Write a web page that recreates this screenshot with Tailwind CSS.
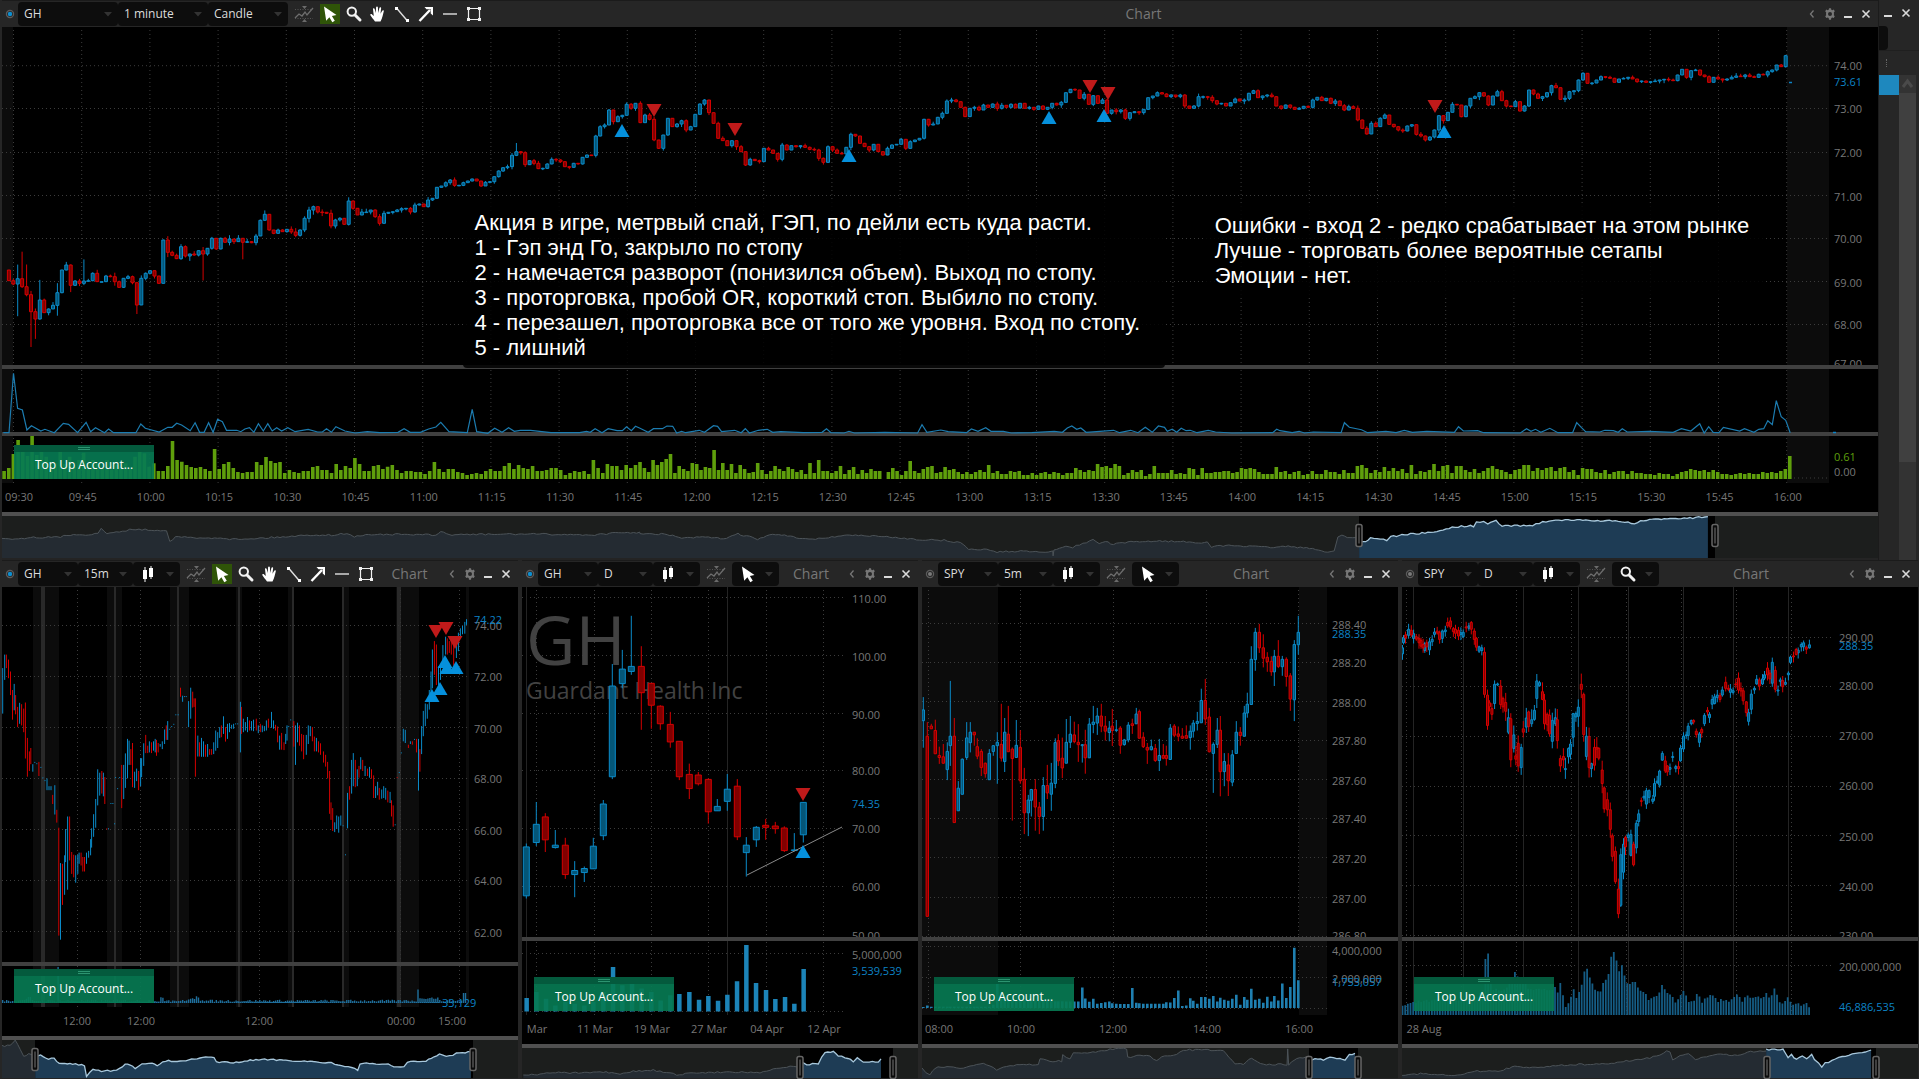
<!DOCTYPE html>
<html lang="ru">
<head>
<meta charset="utf-8">
<title>Chart</title>
<script src="https://cdn.jsdelivr.net/npm/@tailwindcss/browser@4"></script>
</head>
<body class="bg-[#262626] font-['Open_Sans','Noto_Sans',sans-serif] text-[#dcdcdc]">
<svg width="0" height="0" class="absolute" aria-hidden="true">
  <symbol id="i-link" viewBox="0 0 10 10"><circle cx="5" cy="5" r="3.6" fill="none" stroke="#5c5c5c" stroke-width="1.2"/><circle cx="5" cy="5" r="2.2" fill="#0d8fd0"/></symbol>
  <symbol id="i-link-off" viewBox="0 0 10 10"><circle cx="5" cy="5" r="3.6" fill="none" stroke="#5c5c5c" stroke-width="1.2"/><circle cx="5" cy="5" r="2" fill="#7a7a7a"/></symbol>
  <symbol id="i-trend" viewBox="0 0 20 18"><path d="M8 1h5L10.500 4zM8 17h5L10.500 14z" fill="#6b6b6b"/><path d="M1 13l4-4 3 2 3-4 2 3 6-7" fill="none" stroke="#6e6e6e" stroke-width="1.300"/><path d="M1 4.500h18M1 13.500h18" stroke="#555" stroke-dasharray="1 1.500"/></symbol>
  <symbol id="i-cursor" viewBox="0 0 20 20"><path d="M4 2.500l12.500 8.500-4.600.900 2.900 4.800-2.500 1.500-2.900-4.900-3.200 3.500z" fill="#fff"/></symbol>
  <symbol id="i-zoom" viewBox="0 0 20 20"><circle cx="7.800" cy="7.600" r="4.200" fill="none" stroke="#f2f2f2" stroke-width="2"/><path d="M11 11l5 5" stroke="#f2f2f2" stroke-width="3" stroke-linecap="round"/></symbol>
  <symbol id="i-hand" viewBox="0 0 20 20"><path d="M7 17.500c-1.500-2-3.800-4.700-4.600-6.200-.5-1 .8-1.600 1.700-.9l1.700 1.500L5 5.200c-.2-1.200 1.400-1.500 1.700-.3l1 4.100.4-5.700c.1-1.200 1.700-1.200 1.800 0l.3 5.600 1.200-4.800c.3-1.200 1.900-.9 1.700.3l-.6 5.400 1.700-3c.6-1 1.900-.5 1.600.5-.8 2.500-1.200 7-3.300 10.200z" fill="#fff"/></symbol>
  <symbol id="i-line" viewBox="0 0 20 20"><path d="M4.500 4l11 13" stroke="#e0e0e0" stroke-width="1.400"/><path d="M3 3h3v3H3zM14 15h3v3h-3z" fill="#fff"/></symbol>
  <symbol id="i-arrow" viewBox="0 0 20 20"><path d="M3.500 17L14 6" stroke="#fff" stroke-width="2.400"/><path d="M8.500 3H17v8.500l-2.300-2V5.300H10.500z" fill="#fff"/></symbol>
  <symbol id="i-dash" viewBox="0 0 20 20"><path d="M3 10h14" stroke="#a8a8a8" stroke-width="2"/></symbol>
  <symbol id="i-rect" viewBox="0 0 20 20"><path d="M4.500 4.500h11v11h-11z" fill="none" stroke="#f0f0f0" stroke-width="1.200"/><path d="M3 3h3v3H3zM14 3h3v3h-3zM3 14h3v3H3zM14 14h3v3h-3z" fill="#f0f0f0"/></symbol>
  <symbol id="i-candles" viewBox="0 0 14 18"><path d="M2 5h4v9H2zM8 3h4v9H8z" fill="#fff"/><path d="M4 2v15M10 1v13" stroke="#fff"/></symbol>
  <symbol id="i-caret" viewBox="0 0 8 5"><path d="M0 0h8L4 4.500z" fill="#333"/></symbol>
  <symbol id="i-back" viewBox="0 0 10 10"><path d="M6.500 1.500L3.500 5l3 3.500" fill="none" stroke="#777" stroke-width="1.300"/></symbol>
  <symbol id="i-gear" viewBox="0 0 12 12"><path fill="#777" fill-rule="evenodd" d="M5 .3h2l.3 1.500 1 .5 1.400-.8 1.100 1.700-1 1.200.2 1.600-.2 1.200 1 1.100-1.100 1.800-1.400-.7-1 .6L7 11.700H5l-.3-1.700-1-.6-1.400.7-1.100-1.800 1-1.100L2 6l.2-1.600-1-1.200L2.300 1.500l1.400.8 1-.5zM6 4a2 2 0 1 0 0 4 2 2 0 0 0 0-4z"/></symbol>
  <symbol id="i-min" viewBox="0 0 10 10"><path d="M1 8h8" stroke="#dadada" stroke-width="2"/></symbol>
  <symbol id="i-close" viewBox="0 0 10 10"><path d="M1.500 1.500l7 7M8.500 1.500l-7 7" stroke="#dadada" stroke-width="1.600"/></symbol>
</svg>

<main class="flex h-screen min-h-[700px] flex-col overflow-hidden pl-0.5">
  <div class="flex min-h-0 flex-[560_1_0%]">
    <section class="flex min-w-0 flex-1 flex-col" aria-label="GH 1 minute">
      <header id="h-main" class="flex h-[27px] shrink-0 items-center border-t border-[#1b1b1b] pr-[7px]"></header>
      <div class="relative min-h-0 flex-1">
        <svg id="c-main" class="absolute inset-0 size-full bg-black"></svg>
        <p class="absolute top-[175px] left-[24.6%] h-[166px] w-[702px] rounded bg-black/85 px-[11px] py-2 font-['Liberation_Sans',Arial,sans-serif] text-[22px]/[25px] whitespace-nowrap text-white">Акция в игре, метрвый спай, ГЭП, по дейли есть куда расти.<br>1 - Гэп энд Го, закрыло по стопу<br>2 - намечается разворот (понизился объем). Выход по стопу.<br>3 - проторговка, пробой OR, короткий стоп. Выбило по стопу.<br>4 - перезашел, проторговка все от того же уровня. Вход по стопу.<br>5 - лишний</p>
        <p class="absolute top-[178px] left-[64%] h-[90px] w-[560px] rounded bg-black/85 px-3 py-2 font-['Liberation_Sans',Arial,sans-serif] text-[22px]/[25px] whitespace-nowrap text-white">Ошибки - вход 2 - редко срабатывает на этом рынке<br>Лучше - торговать более вероятные сетапы<br>Эмоции - нет.</p>
        <button class="absolute bottom-[81px] left-3 h-[34px] w-[140px] border-t-[7px] border-[#045a3d] bg-[#067a52]/92 pb-0.5 text-xs text-white"><span class="absolute -top-[5px] left-16 h-[3px] w-3 border-y border-[#2c9470]"></span>Top Up Account...</button>
      </div>
    </section>
    <aside class="flex w-[41px] shrink-0 flex-col border-l border-[#1b1b1b]" aria-label="Panel">
      <header class="flex h-[26px] shrink-0 items-center gap-2 pl-1">
        <button aria-label="Minimize panel"><svg class="size-2.5"><use href="#i-min"/></svg></button>
        <button aria-label="Close panel"><svg class="size-2.5"><use href="#i-close"/></svg></button>
      </header>
      <div class="h-6 w-[9px] rounded-r bg-[#0d0d0d]"></div>
      <div class="h-[25px] border-t border-[#1f1f1f] pt-2 pl-[7px]"><div class="h-2 w-px border-l border-dotted border-[#666]"></div></div>
      <div class="flex min-h-0 flex-1">
        <div class="h-5 w-5 bg-[#1e88be]"></div>
        <div class="flex w-[17px] flex-col bg-[#333]">
          <svg class="h-[18px] w-[17px]" viewBox="0 0 17 18"><path d="M4 12l4.500-6 4.500 6" fill="none" stroke="#4a4a4a" stroke-width="3"/></svg>
          <div class="h-[76%] bg-[#404040]"></div>
        </div>
      </div>
    </aside>
  </div>

  <div class="grid min-h-0 flex-[519_1_0%] grid-cols-[516fr_396fr_476fr_516fr] gap-x-1 pr-px">
    <section class="flex min-w-0 flex-col" aria-label="GH 15 minutes">
      <header id="h-gh15" class="flex h-[27px] shrink-0 items-center border-t border-[#1b1b1b] pr-[7px]"></header>
      <div class="relative min-h-0 flex-1">
        <svg id="c-gh15" class="absolute inset-0 size-full bg-black"></svg>
        <button class="absolute bottom-[76px] left-3 h-[34px] w-[140px] border-t-[7px] border-[#045a3d] bg-[#067a52]/92 pb-0.5 text-xs text-white"><span class="absolute -top-[5px] left-16 h-[3px] w-3 border-y border-[#2c9470]"></span>Top Up Account...</button>
      </div>
    </section>
    <section class="flex min-w-0 flex-col" aria-label="GH daily">
      <header id="h-ghd" class="flex h-[27px] shrink-0 items-center border-t border-[#1b1b1b] pr-[7px]"></header>
      <div class="relative min-h-0 flex-1">
        <svg id="c-ghd" class="absolute inset-0 size-full bg-black"></svg>
        <button class="absolute bottom-[68px] left-3 h-[34px] w-[140px] border-t-[7px] border-[#045a3d] bg-[#067a52]/92 pb-0.5 text-xs text-white"><span class="absolute -top-[5px] left-16 h-[3px] w-3 border-y border-[#2c9470]"></span>Top Up Account...</button>
      </div>
    </section>
    <section class="flex min-w-0 flex-col" aria-label="SPY 5 minutes">
      <header id="h-spy5" class="flex h-[27px] shrink-0 items-center border-t border-[#1b1b1b] pr-[7px]"></header>
      <div class="relative min-h-0 flex-1">
        <svg id="c-spy5" class="absolute inset-0 size-full bg-black"></svg>
        <button class="absolute bottom-[68px] left-3 h-[34px] w-[140px] border-t-[7px] border-[#045a3d] bg-[#067a52]/92 pb-0.5 text-xs text-white"><span class="absolute -top-[5px] left-16 h-[3px] w-3 border-y border-[#2c9470]"></span>Top Up Account...</button>
      </div>
    </section>
    <section class="flex min-w-0 flex-col" aria-label="SPY daily">
      <header id="h-spyd" class="flex h-[27px] shrink-0 items-center border-t border-[#1b1b1b] pr-[7px]"></header>
      <div class="relative min-h-0 flex-1">
        <svg id="c-spyd" class="absolute inset-0 size-full bg-black"></svg>
        <button class="absolute bottom-[68px] left-3 h-[34px] w-[140px] border-t-[7px] border-[#045a3d] bg-[#067a52]/92 pb-0.5 text-xs text-white"><span class="absolute -top-[5px] left-16 h-[3px] w-3 border-y border-[#2c9470]"></span>Top Up Account...</button>
      </div>
    </section>
  </div>
</main>

<script>
// Window headers.
const caret = '<svg class="absolute right-1.5 h-[5px] w-2"><use href="#i-caret"/></svg>';
const tools = '<div class="ml-1 flex gap-1"><button aria-label="Cursor" class="bg-[#2f5408]"><svg class="size-5"><use href="#i-cursor"/></svg></button>' +
  [['Zoom', 'zoom'], ['Pan', 'hand'], ['Line', 'line'], ['Arrow', 'arrow'], ['Level', 'dash'], ['Rectangle', 'rect']].map(t => `<button aria-label="${t[0]}"><svg class="size-5"><use href="#i-${t[1]}"/></svg></button>`).join('') + '</div>';
const oneTool = icon => `<button aria-label="Tool" class="relative ml-1 flex h-6 w-[47px] items-center rounded bg-[#0d0d0d] pl-1.5"><svg class="size-5"><use href="#i-${icon}"/></svg>${caret}</button>`;
const styleIcon = `<button aria-label="Style" class="relative flex w-[47px] items-center rounded bg-[#0d0d0d] pl-2"><svg class="h-[18px] w-3.5"><use href="#i-candles"/></svg>${caret}</button>`;
const styleText = `<label class="relative flex w-20 items-center rounded bg-[#0d0d0d]"><select aria-label="Style" class="w-full appearance-none px-1.5"><option>Candle</option></select>${caret}</label>`;
function header(id, symbol, interval, link, style, toolbar, wide) {
  document.getElementById('h-' + id).innerHTML = `
    <svg class="mx-[3px] size-2.5"><use href="#${link}"/></svg>
    <div class="flex h-6 text-xs">
      <label class="relative flex items-center rounded bg-[#0d0d0d] ${wide ? 'w-[100px]' : 'w-[60px]'}"><input aria-label="Symbol" value="${symbol}" class="w-full bg-transparent px-1.5 outline-none">${caret}</label>
      <label class="relative flex items-center rounded bg-[#0d0d0d] ${wide ? 'w-[90px]' : 'w-[55px]'}"><select aria-label="Interval" class="w-full appearance-none px-1.5"><option>${interval}</option></select>${caret}</label>
      ${style}
    </div>
    <button aria-label="Studies" class="ml-1 flex w-6 justify-center"><svg class="h-[18px] w-5"><use href="#i-trend"/></svg></button>
    ${toolbar}
    <h2 class="flex-1 pr-1 text-center text-sm text-[#777]">Chart</h2>
    <div class="flex items-center gap-2">
      <button aria-label="Back"><svg class="size-2.5"><use href="#i-back"/></svg></button>
      <button aria-label="Settings"><svg class="-mx-px size-3"><use href="#i-gear"/></svg></button>
      <button aria-label="Minimize"><svg class="size-2.5"><use href="#i-min"/></svg></button>
      <button aria-label="Close"><svg class="size-2.5"><use href="#i-close"/></svg></button>
    </div>`;
}
header('main', 'GH', '1 minute', 'i-link', styleText, tools, true);
header('gh15', 'GH', '15m', 'i-link', styleIcon, tools);
header('ghd', 'GH', 'D', 'i-link', styleIcon, oneTool('cursor'));
header('spy5', 'SPY', '5m', 'i-link-off', styleIcon, oneTool('cursor'));
header('spyd', 'SPY', 'D', 'i-link-off', styleIcon, oneTool('zoom'));

// Deterministic noise for small wick and line detail.
let seed = 7;
const rnd = () => (seed = (seed * 16807) % 2147483647) / 2147483647;
const nums = s => s.trim().split(/[\s,]+/).map(Number);
// Each frame maps stored series units to drawing units: [originX, originY, unitsPerX, unitsPerY].
const A = [0, 0, 2.45, 3], B = [640, 0, 2.45, 3], C = [1280, 0, 2.454, 3];
const A2 = [0, 360, 2.45, 3], B2 = [640, 360, 2.45, 3], C2 = [1280, 360, 2.454, 3];
const G = [0, 550, 2.958, 2.964], H = [510, 550, 3, 2.964], S = [910, 550, 3, 2.964], D = [1390, 550, 2.964, 2.964];
const px = (f, x) => f[0] + x / f[2], py = (f, y) => f[1] + y / f[3];
const pts = (f, s) => { const n = nums(s), o = []; for (let i = 0; i < n.length; i += 2) o.push([px(f, n[i]), py(f, n[i + 1])]); return o; };
const spread = (f, x0, x1, s) => { const n = nums(s); return n.map((v, i) => [px(f, x0 + (x1 - x0) * i / (n.length - 1)), py(f, v)]); };
const rough = (p, step, amp) => { const o = []; for (let i = 0; i < p.length - 1; i++) { const [a, b] = p[i], [c, d] = p[i + 1], n = Math.max(1, Math.round((c - a) / step)); for (let k = 0; k < n; k++) o.push([a + (c - a) * k / n, b + (d - b) * k / n + (rnd() - .5) * amp]); } o.push(p[p.length - 1]); return o; };
const at = (p, x) => { for (let i = 1; i < p.length; i++) if (x <= p[i][0]) { const [a, b] = p[i - 1], [c, d] = p[i]; return b + (d - b) * (x - a) / (c - a || 1); } return p[p.length - 1][1]; };

// Minute candles: closes only, each opens at the previous close.
const closes = [
 ...spread(A, 11, 1557, "810 842 852 836 860 884 935 957 900 938 927 916 878 810 795 856 843 850 843 842 820 845 845 828 830 845 862 835 830 848 915 835 820 812 828 850 720 757 766 776 740 768 762 765 752 762 745 715 747 715 727 717 725 715 727 725 728 708 661 643 690 700 690 695 688 696 706 690 655 630 620 636 637 640 678 660 655 673 603 625 645 636 636 630 650 670 640 637 635 630 626 625 636 615 612 620 600 595 562 558 548 540 556 556 548 543 537 543 558 547 545 530 513 503 500 466 455 458 494 482 490 506 505 492 478 480 485 500 502 490 492 472 465 466 408 380 375 330 365 350 346 313 325 310"),
 ...spread(B, 1, 1559, "368 345 358 420 445 405 355 380 372 362 390 380 343 312 300 338 370 415 422 437 422 440 455 495 478 482 485 445 450 460 478 435 450 437 440 437 442 448 450 475 487 440 450 460 462 442 403 408 430 440 450 433 455 465 445 435 433 418 445 425 420 415 358 375 372 352 340 303 300 305 322 350 325 322 330 315 322 312 325 316 322 313 324 310 325 322 328 318 328 322 310 315 307 278 268 270 295 283 313 287 310 300 340 330 335 330 355 338 335 338 328 293 288 278 282 290 285 290 285 318 325 318 290 290 292 302 312 310 318 308 297 303 300 280 272 293 288 285 290 318"),
 ...spread(C, 3, 1241, "325 315 322 328 325 319 322 300 292 302 295 310 303 317 330 320 325 360 385 402 370 380 355 345 373 380 390 393 378 374 403 408 420 411 390 347 362 337 313 315 350 318 295 290 278 288 315 288 275 302 318 320 305 333 318 270 282 295 290 278 257 263 298 295 275 272 240 220 250 249 240 230 232 235 247 237 235 232 237 245 243 247 245 243 240 238 240 242 225 208 232 212 210 225 230 247 232 237 240 237 232 228 230 225 230 232 223 225 215 210 195 200 167")];
const extra = { 4: [26, 0], 5: [22, 0], 6: [0, 35], 7: [0, 18], 8: [16, 0], 3: [12, 30], 15: [0, 6], 18: [20, 0], 12: [8, 10], 30: [0, 9], 45: [0, 26], 54: [0, 17], 116: [8, 0] };
const mainCandles = closes.slice(1).map(([x, c], i) => {
  const o = closes[i][1], t = Math.min(o, c), b = Math.max(o, c), e = extra[i + 1] || [0, 0], w = i < 90 ? 5 : 3.5;
  return { x, t, b, hi: t - rnd() * rnd() * w - e[0], lo: b + rnd() * rnd() * w + e[1], up: c <= o };
});
const mainVol = [
 ...spread(A2, 10, 1557, "333 324 282 240 262 288 228 285 258 290 320 310 275 312 290 320 300 278 320 300 310 325 300 330 315 320 310 325 290 275 280 320 310 333 333 318 243 300 305 315 321 324 321 327 333 267 327 312 306 324 336 339 336 336 306 315 291 303 309 306 339 330 336 339 333 333 321 318 330 330 339 312 330 318 324 294 312 333 333 318 315 327 320 315 330 339 333 333 336 336 342 333 306 327 336 327 327 336 339 345 342 339 342 333 327 333 333 318 309 327 315 324 327 318 333 333 330 324 324 330 345 339 333 336 333 342 300 324 339 312 318 318 330 315 324 315"),
 ...spread(B2, 0, 1559, "306 324 336 300 315 306 297 282 339 318 327 333 309 312 330 321 324 270 330 309 330 312 339 315 327 339 336 309 330 342 333 318 327 333 321 327 336 330 342 309 339 300 333 333 339 333 318 342 330 321 342 330 339 327 333 333 357 336 324 333 345 333 303 333 339 327 321 318 339 336 321 330 327 336 342 336 342 336 330 336 315 339 333 342 342 333 336 333 345 345 339 345 339 336 342 336 339 345 339 339 324 330 336 330 333 312 321 318 324 312 318 345 339 330 336 330 348 342 318 339 339 339 330 342 339 342 324 327 345 324 339 339 336 336 333 333 339 336 324 327 324 327 336 342 342 342 321"),
 ...spread(C2, 2, 1251, "336 333 342 336 333 345 342 333 342 342 330 336 336 342 330 339 339 318 315 324 339 330 336 321 333 324 333 327 339 315 342 333 336 330 312 333 318 315 339 318 318 330 336 327 339 333 324 318 327 330 336 342 330 327 315 315 333 324 330 324 321 333 324 321 336 330 345 324 327 327 336 339 330 342 336 333 333 342 333 339 339 342 342 345 339 342 342 348 342 336 333 327 330 333 330 336 330 336 342 342 345 342 339 342 339 342 342 336 339 336 339 333 327 288")];
const mainLine = [
 ...pts(A2, "8,218 22,218 33,40 43,145 55,150 66,210 77,197 100,213 110,208 133,218 155,190 168,193 190,218 211,187 222,215 234,203 256,218 266,207 278,218 333,218 345,192 356,205 390,216 411,202 422,202 433,190 445,195 466,212 478,188 489,217 500,217 511,188 522,217 533,178 545,185 555,211 580,211 590,215 600,207 611,203 622,217 633,191 645,213 656,191 667,213 678,203 690,213 705,203 723,215 755,208 778,216 790,216 800,206 812,217 823,200 845,213 870,219 900,215 930,218 975,217 990,206 1005,217 1030,217 1050,207 1068,201 1080,187 1100,215 1145,218 1157,148 1168,215 1195,220 1212,205 1230,217 1246,203 1260,214 1275,211 1300,211 1350,218 1420,218 1437,214 1446,217 1458,206 1475,218 1490,206 1512,212 1525,212 1535,200 1547,212 1557,199"),
 ...pts(B2, "0,205 20,217 33,206 55,206 66,198 80,199 90,219 102,214 112,218 145,211 158,217 180,197 190,199 200,215 232,211 248,218 258,206 268,219 290,211 312,208 325,217 345,215 400,218 446,217 457,206 468,218 500,219 512,214 525,219 600,217 680,219 691,194 703,217 737,210 755,215 800,218 812,207 828,214 847,203 860,214 890,214 910,219 960,218 1015,214 1035,217 1047,204 1058,198 1070,208 1080,204 1093,217 1160,211 1175,218 1202,211 1220,218 1238,202 1255,217 1270,198 1285,202 1292,214 1304,208 1315,217 1326,205 1338,212 1348,211 1365,218 1392,211 1410,216 1450,219 1550,218 1560,208"),
 ...pts(C2, "0,212 30,218 47,214 60,219 82,216 150,218 158,188 170,202 200,209 215,218 260,214 285,218 305,211 325,217 360,214 428,217 438,200 450,213 485,212 500,218 590,219 605,206 616,214 627,208 640,217 662,205 682,218 718,218 728,188 740,203 750,215 785,216 797,211 818,212 830,217 840,206 852,216 905,214 965,217 985,206 1008,213 1030,191 1041,219 1052,200 1063,217 1077,218 1088,202 1128,213 1140,206 1163,217 1175,208 1187,206 1197,182 1208,194 1218,122 1230,170 1241,181 1252,218")];

// Full candles: colour+x, high, body top, body bottom, low.
const full = (f, s) => s.trim().split(/;\s*/).map(r => { const n = nums(r.slice(1)); return { x: px(f, n[0]), hi: py(f, n[1]), t: py(f, n[2]), b: py(f, n[3]), lo: py(f, n[4]), up: r[0] == 'b' }; });
const ghd = full(H, "b49 870 880 1025 1033;b79 747 813 867 877;r106 780 791 859 895;b136 830 875 882 885;r166 853 875 962 975;b194 922 950 962 1029;b223 938 944 956 984;b250 853 878 945 945;b280 741 753 847 860;b307 338 403 672 679;b337 296 353 396 410;b364 195 345 360 370;r394 285 345 423 533;r424 395 395 460 530;r451 460 463 515 533;r481 480 517 569 586;r508 567 567 672 682;r538 633 665 707 738;r565 658 667 693 698;r595 677 680 776 811;b622 738 760 773 773;b652 664 709 745 773;r682 679 700 850 860;b709 851 875 897 968;b739 818 822 859 880;r767 797 816 822 859;r796 806 818 826 841;r823 819 824 891 895;b853 839 889 891 893;b880 747 748 844 867");
const spy5 = full(S, "b40 436 474 506 586;r52 510 552 1086 1086;r64 515 522 530 530;r76 503 535 604 604;r88 583 609 615 634;r100 575 613 632 634;b112 570 597 651 682;b121 388 552 580 640;r133 498 552 808 808;b145 685 706 773 773;b157 618 620 724 724;b170 510 557 615 622;b181 510 540 571 600;r193 540 540 548 580;r202 558 583 611 620;r214 590 597 645 670;r226 630 632 663 675;b238 590 603 681 681;b250 578 580 597 610;b262 540 570 580 693;r274 456 576 617 627;b284 498 540 627 658;r295 462 546 598 598;r307 585 590 618 802;b319 504 579 615 615;r331 534 585 684 693;r343 646 680 779 842;b355 726 741 779 848;b364 708 710 742 790;r376 679 710 762 832;r388 747 762 790 842;b400 673 698 790 832;r412 637 698 720 738;b424 631 691 724 773;b436 558 571 692 706;r445 546 565 625 640;r457 556 617 646 676;b469 501 570 632 632;b481 492 546 570 587;r493 509 548 568 573;r505 516 570 577 628;b517 575 577 580 630;r526 533 577 616 663;b538 498 516 616 616;b550 462 510 517 543;b562 468 492 513 548;r574 456 492 522 540;r586 492 522 537 565;b598 507 528 541 567;r607 471 522 535 581;b619 504 533 535 540;r631 522 528 579 604;b643 560 563 577 580;b655 510 519 563 570;r667 500 515 520 545;b679 468 486 515 515;r688 473 479 558 558;r700 540 555 583 587;r712 572 585 593 634;b724 562 583 592 594;r736 575 588 624 628;b748 560 609 624 655;r760 575 609 617 620;r769 580 609 618 639;b781 516 528 621 621;r793 516 522 549 555;r805 523 545 552 567;r817 528 552 558 560;r829 520 550 558 558;b841 520 537 556 592;b850 504 513 537 556;b862 480 508 514 535;b874 411 446 512 512;r886 382 446 501 518;r898 468 495 598 600;b910 570 576 603 720;b922 498 534 576 587;r931 492 534 657 730;b943 602 627 657 700;r955 602 637 684 729;b967 593 607 688 700;b979 507 540 603 603;r991 525 540 550 580;b1003 462 483 552 552;b1012 423 457 483 497;b1024 285 324 458 458;b1036 231 244 325 358;r1048 219 244 290 305;r1060 250 290 321 348;r1072 303 318 331 361;r1084 315 330 361 373;b1093 296 315 361 403;r1105 267 315 345 350;b1117 314 324 346 373;r1129 318 324 375 405;r1141 365 373 442 477;b1153 267 280 444 507;b1165 195 244 281 310");
// Bodies only: colour+x, top, bottom.
const spyd = "b37 290 308;b40 260 275;r46 252 260;b55 235 253;r63 238 252;b70 248 262;r78 257 264;r86 263 275;r92 268 285;r98 280 290;b103 277 298;r109 275 287;b117 272 296;b125 265 272;b132 243 250;r140 240 246;r147 245 265;b155 240 262;b164 237 242;r171 215 225;r179 210 228;r188 233 242;r194 235 247;r203 238 255;b210 245 250;b217 244 257;r226 228 231;b234 225 232;r241 215 235;r250 240 265;r256 262 288;b264 287 300;b272 290 298;r280 303 428;r289 430 520;r295 453 465;r302 470 487;b310 398 455;b319 397 400;r328 403 458;r335 440 465;r343 452 478;b351 497 540;r358 500 622;b367 548 588;r373 610 620;r380 573 640;b389 585 645;r395 530 540;b404 498 525;r411 480 523;b420 503 515;b428 475 502;b435 388 440;b443 393 402;r452 420 443;r458 445 515;r466 487 518;r473 490 545;b481 505 567;b490 497 515;r496 503 565;r505 618 640;r514 612 622;b520 648 651;b529 588 613;b535 575 605;b543 485 555;b551 485 495;b558 466 493;r567 398 413;r574 428 547;b582 552 612;r590 553 645;b597 633 648;r606 585 638;r613 585 590;r619 588 617;r629 652 692;r635 705 767;r644 740 770;r653 770 828;r659 847 908;r668 893 983;r677 1005 1078;b684 903 1053;b692 872 955;r698 852 880;b706 845 852;b714 843 905;r722 872 933;b730 810 883;b737 782 805;r745 743 745;b753 730 735;b760 713 753;b768 713 733;b779 738 745;b784 692 730;b792 685 690;b799 655 697;b807 603 623;r816 625 655;r822 640 658;b830 645 650;b838 612 615;b847 642 648;r855 642 648;b861 587 625;b870 552 590;b878 548 550;b884 522 550;b893 505 515;r900 505 510;r908 537 547;b917 545 570;r924 532 542;b932 490 515;r941 475 480;b947 487 497;b955 443 457;b962 435 455;b970 430 437;r978 432 443;b985 415 430;r995 392 410;r1003 410 413;b1009 412 422;b1017 417 422;r1025 397 400;r1033 380 415;r1040 410 418;r1047 417 447;r1056 450 482;b1063 482 508;b1071 427 472;b1080 410 415;b1087 383 397;r1095 385 403;b1104 382 397;b1110 370 380;r1119 350 370;r1126 365 382;b1133 333 395;r1142 357 413;b1150 415 418;b1157 385 390;r1164 387 405;b1172 392 398;b1181 365 370;b1187 317 333;r1196 314 317;r1204 295 310;b1210 297 305;b1219 280 287;b1226 275 287;r1234 288 294;b1243 281 290".split(';').map(r => {
  const [x, t, b] = nums(r.slice(1)), big = x > 340 && x < 700 ? 30 : 16;
  return { x: px(D, x), t: py(D, t), b: py(D, b), hi: py(D, t - 2 - rnd() * big), lo: py(D, b + 2 + rnd() * big), up: r[0] == 'b' };
});
// Range bars: colour+x, high, low.
const gh15 = "b8 350 485;b14 310 385;r19 310 350;r25 325 380;r31 360 430;r37 415 503;b42 397 475;r46 430 487;r52 465 525;b58 453 515;r64 457 520;r70 470 540;r75 452 618;r81 557 672;r87 597 655;r91 587 635;b97 635 657;b103 628;b109 632;r115 628 670;b121 643;b127 674;b133 682;b139 677 712;b145 700 712;b151 700 712;r156 726 753;b162 697 784;r168 770 808;r174 823 1143;b179 928 1155;r185 930 1052;b191 905 1022;b194 827 925;b200 790 1007;r206 790 920;r212 895 960;r218 903 970;b224 905 986;b230 903 960;b234 897 930;r240 897 935;r245 910 953;r250 910 953;b256 897 930;b262 892 912;b268 857 905;b271 825 882;b277 783 850;b283 738 823;b289 650 757;b295 660 728;r301 655 722;b306 660 730;r310 673 753;r316 825;b321 825;b328 750;b334 750;b339 810;b342 673;b348 706;b354 673;r360 637 765;b366 637 738;b371 603 705;b377 560 677;b382 565 637;r387 590 637;r392 572 703;b398 657 705;b404 648 685;r410 655 712;b416 617 700;b419 617 673;b425 573 640;r431 548 602;r437 580 602;b442 567 600;r448 570 602;b454 567 595;b459 560 600;r463 563 610;r468 572 600;b474 575 583;b480 567 590;b487 532 575;r492 520 563;b496 507 563;b502 530;b508 522;b514 515;b520 487;b527 487;r534 408 435;b540 432 450;b546 433;b551 433;b558 448 525;b564 408 500;r570 420 467;r574 440 465;r578 440 672;b585 550 612;r590 570 612;b596 557 613;b602 567 613;r608 577 613;b614 575 613;r620 590 607;r626 590 607;b632 570 605;b638 535 595;b644 540 587;b650 525 557;r655 520 555;b661 493 545;r667 525 568;b673 515 560;b679 513 540;b685 518 530;b691 515 530;b697 514;b703 514;b711 450 600;r714 465 545;b720 500 540;b726 510 535;b732 495 540;r738 505 535;b744 507 535;b750 503 537;r758 500 535;b764 520 543;r770 515 540;b776 520 540;b782 522 537;b788 505 535;r794 500 527;b803 480 527;b809 505 530;r815 518 535;r821 523 570;b827 550 592;r833 542 592;r840 570 593;b845 545 575;b849 520 565;b854 522;b860 502;b866 522;r869 507 583;b874 520 637;b880 512 570;r886 520 580;r892 545 597;r898 548 620;b906 548 607;b912 520 575;b918 522 552;r924 525 567;r930 553 597;b936 557 597;r942 567 600;r948 573 607;r957 597 630;r963 607 642;r969 628 677;r975 655 782;r979 748 800;r984 765 833;b990 807 836;b996 787 827;b1002 790 838;b1008 787 817;b1015 816;b1022 902;b1028 720 825;r1034 700 740;b1040 622 722;b1045 602 700;r1051 622 703;b1057 650 700;r1062 640 675;b1067 614 650;r1073 622 655;b1080 640 670;r1087 648 670;b1093 643 675;r1099 650 678;r1105 668 735;b1111 700 735;b1117 687 727;r1122 705 740;b1129 710 737;b1135 700 735;b1141 705 740;r1147 713 748;b1154 717 750;r1158 742 790;r1163 757 820;b1169 813;r1175 673;b1181 658;b1187 600;b1193 530 567;b1199 533 572;r1208 577 587;b1214 567 575;r1220 567 577;b1226 560;r1232 560 600;b1238 560 713;r1242 590 657;b1247 522 605;b1252 477 552;b1258 455 522;b1264 457 500;b1270 415 473;b1275 360 420;b1279 295 410;r1285 270 370;r1291 280 400;b1297 345 400;b1303 345 385;b1310 282 345;b1318 257 310;r1323 262 310;r1329 270 305;r1335 270 310;r1342 280 343;b1350 280 320;b1356 245 300;b1362 232 258;b1368 225 250;b1375 213 248;b1380 205 222".split(';').map(r => {
  const [x, t, b = t + 3] = nums(r.slice(1)); return { x: px(G, x), hi: py(G, t), lo: py(G, b), up: r[0] == 'b' };
});

const gh15Vol = []; for (let x = 8; x < 1380; x += 5.85) {
  let v = 1339 - rnd() * 6;
  if (x > 60 && x < 95 || x > 475 && x < 500 || x > 555 && x < 610) v -= rnd() * 12;
  if (x > 168 && x < 175) v = 1236; if (x > 1235 && x < 1241) v = 1303; if (x > 1241 && x < 1300) v -= 8; if (x > 1370) v = 1313;
  gh15Vol.push([px(G, x), py(G, v)]);
}
const ghdVol = pts(H, "50,1328 79,1310 108,1330 136,1350 166,1340 194,1345 223,1350 250,1340 280,1310 309,1236 337,1290 366,1285 395,1300 424,1310 452,1335 481,1320 508,1316 538,1310 567,1333 595,1322 624,1336 652,1318 681,1278 709,1171 738,1283 768,1304 796,1331 825,1325 853,1345 881,1242");
const s5env = pts(S, "40,1355 52,1350 64,1354 240,1354 255,1345 262,1280 274,1320 300,1335 480,1338 505,1338 515,1290 527,1333 540,1340 550,1330 562,1345 598,1338 610,1345 655,1346 667,1298 679,1342 700,1345 760,1345 770,1340 785,1342 793,1328 806,1304 817,1352 829,1350 840,1328 862,1345 874,1325 886,1325 898,1330 910,1322 922,1338 933,1325 945,1335 955,1336 967,1330 979,1318 991,1348 1003,1325 1012,1333 1025,1298 1036,1333 1048,1330 1060,1342 1070,1322 1084,1338 1095,1318 1105,1335 1117,1285 1129,1328 1141,1295 1152,1170 1164,1275");
const spy5Vol = spy5.map((c, i) => [c.x, Math.min(1007, at(s5env, c.x))]);
const sdenv = pts(D, "37,1345 70,1335 150,1330 250,1325 275,1300 281,1218 289,1170 295,1242 302,1300 345,1300 358,1248 367,1285 372,1227 380,1265 395,1262 410,1300 480,1300 486,1285 500,1310 505,1280 515,1328 522,1355 535,1328 543,1287 551,1322 567,1295 574,1248 582,1227 590,1260 606,1292 613,1310 629,1295 635,1257 644,1282 653,1217 659,1190 668,1186 677,1262 684,1215 692,1240 698,1270 706,1285 722,1273 730,1275 737,1305 760,1310 768,1335 775,1320 792,1322 807,1285 822,1305 847,1335 870,1303 884,1330 900,1340 908,1310 925,1335 955,1312 970,1335 985,1325 1003,1335 1033,1305 1040,1345 1056,1312 1071,1325 1104,1320 1117,1310 1126,1325 1142,1290 1150,1330 1165,1340 1181,1322 1196,1348 1204,1335 1219,1345 1234,1335 1243,1350");
const spydVol = []; for (let x = 37; x <= 1244; x += 7.93) spydVol.push([px(D, x), at(sdenv, px(D, x)) + rnd() * 3]);

const range = (a, step, n) => Array.from({ length: n }, (_, i) => a + step * i);
const hhmm = k => { const m = 570 + 15 * k; return String(Math.floor(m / 60)).padStart(2, '0') + ':' + String(m % 60).padStart(2, '0'); };
const charts = [
 { id: 'c-main', box: [2, 27, 1876, 533], plotR: 1829, end: 483, split: [365, 432, 512], navB: 558,
   v: range(13.5, 68.2, 27), h: [65.7, 108.5, 152.5, 195.5, 238.5, 281.5, 324.5], dotLines: [[1790, 478, 1829]],
   bands: [[2, 13, 27, 483], [1787, 1829, 27, 483]], candles: mainCandles, cw: 3,
   bars: { p: mainVol, base: 479, w: 3.6, c: '#5f9f0c' }, line: mainLine,
   ups: [[622, 124], [849, 149], [1049, 111], [1104, 109], [1444, 125]], downs: [[654, 104], [735, 123], [1090, 80], [1108, 87], [1435, 100]],
   yl: [[66, '74.00'], [109, '73.00'], [153, '72.00'], [197, '71.00'], [239, '70.00'], [283, '69.00'], [325, '68.00'], [364, '67.00'], [472, '0.00']], yx: 1834,
   cur: [[82, '73.61']], green: [[457, '0.61']],
   tl: range(0, 1, 27).map(k => [k ? 14.5 + 68.2 * k : 19, hhmm(k)]), ty: 497, tick: [[1790, 82.500], [1834, 432.500]],
   nav: [...pts(A2, "5,533 30,538 75,532 140,532 180,523 210,524 240,520 248,507 262,520 300,515 318,508 408,511 416,545 430,530 490,535 540,533 570,538 630,535 700,530 760,525 820,525 850,520 868,530 910,523 1050,524 1068,528 1080,515 1100,524 1300,522 1450,525 1500,520 1567,517"), ...pts(B2, "0,523 60,522 80,527 95,534 160,532 205,536 240,522 275,532 288,540 310,527 340,523 390,535 430,536 470,532 500,525 570,528 640,534 700,540 745,541 785,548 805,568 850,568 875,576 940,573 1000,575 1011,575 1012,590 1014,570 1035,560 1060,562 1085,550 1110,540 1125,550 1140,545 1160,553 1210,545 1280,543 1390,548 1400,560 1450,556 1500,560 1568,562"), ...pts(C2, "1,560 20,558 80,567 110,575 133,573 142,530 152,526 165,532 185,533 194,534")],
   sel: pts(C2, "194,545 210,545 222,533 262,540 272,530 320,522 370,518 400,510 430,500 475,498 482,487 500,485 510,493 530,482 545,498 620,496 645,485 700,480 830,483 870,492 885,483 950,475 1020,473 1050,470"), win: [1359, 1715] },
 { id: 'c-gh15', box: [2, 587, 516, 492], plotR: 469, end: 1007, split: [962, 1036], navB: 1078,
   v: [77.5, 140.5, 259.5, 400.5, 459.5], h: [625.5, 676.5, 727.5, 778.5, 829.5, 880.5, 931.5],
   bands: [[33, 59, 587, 1007], [107, 122, 587, 1007], [170, 189, 587, 1007], [236, 242, 587, 1007], [288, 294, 587, 1007], [342, 349, 587, 1007], [396, 419, 587, 1007], [466, 469, 587, 1007]],
   solid: [42, 44, 115, 178, 239, 293, 343, 398, 400], ranges: gh15,
   bars: { p: gh15Vol, base: 1003, w: 1.4, c: '#1f6f9c' }, dotBlue: [2, 1002.500, 440],
   ups: [[432, 689], [440, 682], [445, 655], [447, 661], [456, 661]], downs: [[436, 625], [446, 622], [455, 636]],
   yl: [[626, '74.00'], [677, '72.00'], [729, '70.00'], [779, '68.00'], [831, '66.00'], [881, '64.00'], [933, '62.00']], yx: 474, cur: [[620, '74.22']], cur2: [442, 1003, '33,129'],
   tl: [[77, '12:00'], [141, '12:00'], [259, '12:00'], [401, '00:00'], [452, '15:00']], ty: 1021,
   nav: pts(G, "6,1470 30,1468 45,1455 60,1480 70,1500 85,1495 104,1500"),
   sel: pts(G, "104,1505 120,1497 135,1508 160,1508 175,1520 215,1523 250,1527 256,1558 275,1537 300,1545 345,1543 370,1525 385,1525 400,1535 420,1525 450,1522 465,1527 490,1515 550,1513 600,1505 633,1505 640,1517 690,1520 740,1513 800,1510 900,1515 980,1520 1010,1530 1040,1535 1058,1542 1065,1522 1140,1523 1165,1530 1195,1533 1205,1517 1260,1515 1300,1495 1330,1500 1350,1492 1393,1487"), win: [35, 473] },
 { id: 'c-ghd', box: [522, 587, 396, 492], plotR: 846, end: 1015, split: [937, 1044], navB: 1078,
   v: [536.5, 594.5, 651.5, 708.5, 766.5, 823.5], h: [597.5, 655.5, 713.5, 770.5, 828.5, 886.5, 953.5, 1011.5], bands: [], thin: [526.5, 727.5], candles: ghd, cw: 6,
   bars: { p: ghdVol, base: 1011.500, w: 4.500, c: '#1c84b8' }, trend: [747, 875, 842, 827], ups: [[803, 845]], downs: [[803, 788]],
   wm: true, yl: [[599, '110.00'], [657, '100.00'], [715, '90.00'], [771, '80.00'], [829, '70.00'], [887, '60.00'], [936, '50.00'], [955, '5,000,000']], yx: 852, cur: [[804, '74.35'], [971, '3,539,539']],
   tl: [[537, 'Mar'], [595, '11 Mar'], [652, '19 Mar'], [709, '27 Mar'], [767, '04 Apr'], [824, '12 Apr']], ty: 1029,
   nav: pts(H, "40,1555 90,1555 120,1548 180,1550 240,1550 280,1547 330,1555 370,1545 430,1542 460,1548 500,1555 560,1550 640,1547 750,1548 790,1540 820,1533 860,1530 871,1525"),
   sel: pts(H, "871,1520 890,1525 925,1522 935,1505 945,1488 970,1487 985,1500 1005,1505 1030,1515 1042,1507 1060,1518 1105,1518 1113,1508"), win: [800, 893] },
 { id: 'c-spy5', box: [922, 587, 476, 492], plotR: 1327, end: 1010, split: [937, 1044], navB: 1078,
   v: [928.5, 1020.5, 1113.5, 1206.5, 1298.5], h: [623.5, 662.5, 701.5, 740.5, 779.5, 818.5, 857.5, 897.5, 936.5, 946.5, 977.5, 1008.5],
   bands: [[922, 998, 587, 1015], [1299, 1327, 587, 1015]], candles: spy5, cw: 2.4,
   bars: { p: spy5Vol, base: 1008, w: 2.6, c: '#1f7fb0' }, ups: [], downs: [],
   yl: [[625, '288.40'], [663, '288.20'], [703, '288.00'], [741, '287.80'], [781, '287.60'], [819, '287.40'], [859, '287.20'], [899, '287.00'], [936, '286.80'], [951, '4,000,000'], [979, '2,000,000']], yx: 1332, cur: [[634, '288.35'], [982, '1,753,057']],
   tl: [[939, '08:00'], [1021, '10:00'], [1113, '12:00'], [1207, '14:00'], [1299, '16:00']], ty: 1029,
   nav: pts(S, "36,1535 48,1550 60,1555 75,1535 120,1530 160,1538 180,1530 220,1520 260,1540 300,1530 340,1525 385,1525 390,1508 420,1515 455,1515 458,1497 480,1508 490,1492 540,1490 600,1480 650,1478 653,1505 690,1498 720,1500 740,1515 755,1503 800,1497 820,1482 940,1482 975,1525 1000,1523 1025,1505 1060,1525 1131,1525 1133,1478 1136,1525 1160,1508 1198,1500"),
   sel: pts(S, "1198,1510 1215,1508 1240,1510 1270,1503 1290,1508 1305,1510 1318,1495 1335,1492"), win: [1309, 1358] },
 { id: 'c-spyd', box: [1402, 587, 516, 492], plotR: 1831, end: 1015, split: [937, 1044], navB: 1078,
   v: [1406.5, 1461.5, 1516.5, 1571.5, 1626.5, 1681.5, 1736.5, 1791.5], h: [637.5, 686.5, 736.5, 786.5, 835.5, 885.5, 935.5, 965.5], bands: [], thin: [1413.5, 1463.5, 1523.5, 1578.5, 1628.5, 1683.5, 1733.5, 1788.5], candles: spyd, cw: 2,
   bars: { p: spydVol, base: 1015, w: 1.8, c: '#155c84' }, ups: [], downs: [],
   yl: [[638, '290.00'], [686, '280.00'], [736, '270.00'], [786, '260.00'], [837, '250.00'], [887, '240.00'], [936, '230.00'], [967, '200,000,000']], yx: 1839, cur: [[646, '288.35'], [1007, '46,886,535']],
   tl: [[1424, '28 Aug']], ty: 1029,
   nav: pts(D, "36,1557 90,1552 140,1555 190,1560 210,1555 250,1545 320,1545 370,1530 430,1535 500,1527 560,1525 620,1525 700,1515 770,1505 800,1497 820,1485 830,1490 838,1510 860,1497 885,1495 905,1510 930,1503 980,1495 1030,1497 1060,1488 1115,1485"),
   sel: pts(D, "1115,1480 1165,1480 1180,1503 1190,1497 1205,1510 1222,1500 1235,1508 1250,1493 1258,1508 1270,1520 1280,1533 1290,1522 1310,1515 1330,1503 1350,1500 1370,1492 1400,1490 1426,1482"), win: [1767, 1876] }
];
charts.forEach(c => { c.nav = rough(c.nav, 3, 1.6); c.sel = rough(c.sel, 3, 1.6); });

function draw(c) {
  const el = document.getElementById(c.id), r = el.getBoundingClientRect(), [x0, y0, w, h] = c.box;
  const fx = r.width / w, fy = r.height / h, X = x => +((x - x0) * fx).toFixed(1), Y = y => +((y - y0) * fy).toFixed(1);
  const R = x0 + w, top = y0 + 3; let o = '';
  const rect = (a, b, c2, d, fill) => `<rect x="${X(a)}" y="${Y(b)}" width="${(c2 - a) * fx}" height="${(d - b) * fy}" fill="${fill}"/>`;
  const line = (a, b, c2, d, st, more = '') => `<path d="M${X(a)} ${Y(b)}L${X(c2)} ${Y(d)}" stroke="${st}" ${more}/>`;
  const text = (x, y, s, cls, anchor = 'start') => `<text x="${X(x)}" y="${Y(y) + 4}" text-anchor="${anchor}" class="${cls}">${s}</text>`;
  const dim = 'fill-[#777777] text-[11px]', blue = 'fill-[#0d83c6] text-[11px]', green = 'fill-[#5f9f0c] text-[11px]';
  const poly = p => 'M' + p.map(q => X(q[0]) + ' ' + Y(q[1])).join('L');
  c.bands.forEach(b => o += rect(b[0], b[2], b[1], b[3], '#0c0c0c'));
  const dots = 'stroke-dasharray="1 3"';
  c.v.forEach(x => o += line(x, top, x, c.end, '#3c3c3c', dots));
  c.h.forEach(y => o += line(x0, y, c.plotR, y, '#3c3c3c', dots));
  (c.dotLines || []).forEach(d => o += line(d[0], d[1], d[2], d[1], '#3c3c3c', dots));
  (c.thin || []).forEach(x => o += line(x, y0, x, c.end, '#242424'));
  (c.solid || []).forEach(x => o += line(x, y0, x, c.end, '#333', 'stroke-width="1.500"'));
  if (c.wm) o += `<text x="${X(526)}" y="${Y(665)}" class="fill-[#424242] text-[68px]">GH</text><text x="${X(526)}" y="${Y(699)}" class="fill-[#424242] text-[23px]">Guardant Health Inc</text>`;
  c.yl.forEach(l => o += text(c.yx, l[0], l[1], dim));
  c.split.forEach((y, i) => o += rect(x0, y, R, y + 4, i == c.split.length - 1 ? '#505050' : '#404040'));
  let bars = ''; c.bars.p.forEach(p => { if (p[1] < c.bars.base) bars += `M${X(p[0] - c.bars.w / 2)} ${Y(p[1])}h${c.bars.w * fx}V${Y(c.bars.base)}h${-c.bars.w * fx}z`; });
  o += `<path d="${bars}" fill="${c.bars.c}"/>`;
  if (c.dotBlue) o += line(c.dotBlue[0], c.dotBlue[1], c.dotBlue[2], c.dotBlue[1], '#1f6f9c', 'stroke-dasharray="1 1"');
  if (c.line) o += `<path d="${poly(c.line)}" fill="none" stroke="#1c7cb0" stroke-width="1.200"/>`;
  [true, false].forEach(up => {
    const st = up ? '#0a8ac8' : '#d40000', fl = up ? '#045678' : '#800000'; let wick = '', body = '';
    (c.candles || []).filter(k => k.up == up).forEach(k => {
      wick += `M${X(k.x)} ${Y(k.hi)}V${Y(k.lo)}`;
      const hh = Math.max(.6, (k.b - k.t) * fy);
      body += `M${X(k.x) - c.cw / 2} ${Y(k.t)}h${c.cw}v${hh}h${-c.cw}z`;
    });
    (c.ranges || []).filter(k => k.up == up).forEach(k => wick += `M${X(k.x)} ${Y(k.hi)}V${Y(k.lo)}`);
    o += `<path d="${wick}" stroke="${st}"/><path d="${body}" stroke="${st}" fill="${fl}"/>`;
  });
  (c.tick || []).forEach(t => o += line(t[0] - 1, t[1], t[0] + 2, t[1], '#0d83c6', 'stroke-width="1.500"'));
  if (c.trend) o += line(...c.trend, '#8a8a8a');
  c.downs.forEach(p => o += `<path d="M${X(p[0]) - 7.5} ${Y(p[1])}h15l-7.500 13z" fill="#c01a1a"/>`);
  c.ups.forEach(p => o += `<path d="M${X(p[0])} ${Y(p[1])}l7.500 13h-15z" fill="#0590dc"/>`);
  c.cur.forEach(l => o += text(c.yx, l[0], l[1], blue));
  (c.green || []).forEach(l => o += text(c.yx, l[0], l[1], green));
  if (c.cur2) o += text(c.cur2[0], c.cur2[1], c.cur2[2], blue);
  c.tl.forEach(l => o += text(l[0], c.ty, l[1], dim, 'middle'));
  // Navigator strip with the selected window and its two grips.
  const nt = c.split[c.split.length - 1] + 4, nb = c.navB;
  o += rect(x0, nt, R, nb, '#1c1e1d') + rect(x0, nb, R, y0 + h, '#242424') + rect(c.win[0], nt, c.win[1], nb, '#000');
  o += `<path d="${poly(c.nav)}V${Y(nb)}H${X(c.nav[0][0])}z" fill="#242b32"/><path d="${poly(c.nav)}" fill="none" stroke="#4c5358"/>`;
  o += `<path d="${poly(c.sel)}V${Y(nb)}H${X(c.sel[0][0])}z" fill="#1e3c55"/><path d="${poly(c.sel)}" fill="none" stroke="#a8c8dc" stroke-width="1.300"/>`;
  c.win.forEach(x => { const gy = Y(nt) + 8.5, gx = X(x); o += `<rect x="${gx - 3}" y="${gy}" width="6" height="22" rx="2" fill="#0a0a0a" stroke="#666" stroke-width="1.500"/><path d="M${gx} ${gy + 3}v16" stroke="#777"/>`; });
  el.innerHTML = o;
}
// Redraw whenever a chart's own box changes size.
const observer = new ResizeObserver(list => list.forEach(e => draw(charts.find(c => c.id == e.target.id))));
charts.forEach(c => { draw(c); observer.observe(document.getElementById(c.id)); });
</script>
</body>
</html>
